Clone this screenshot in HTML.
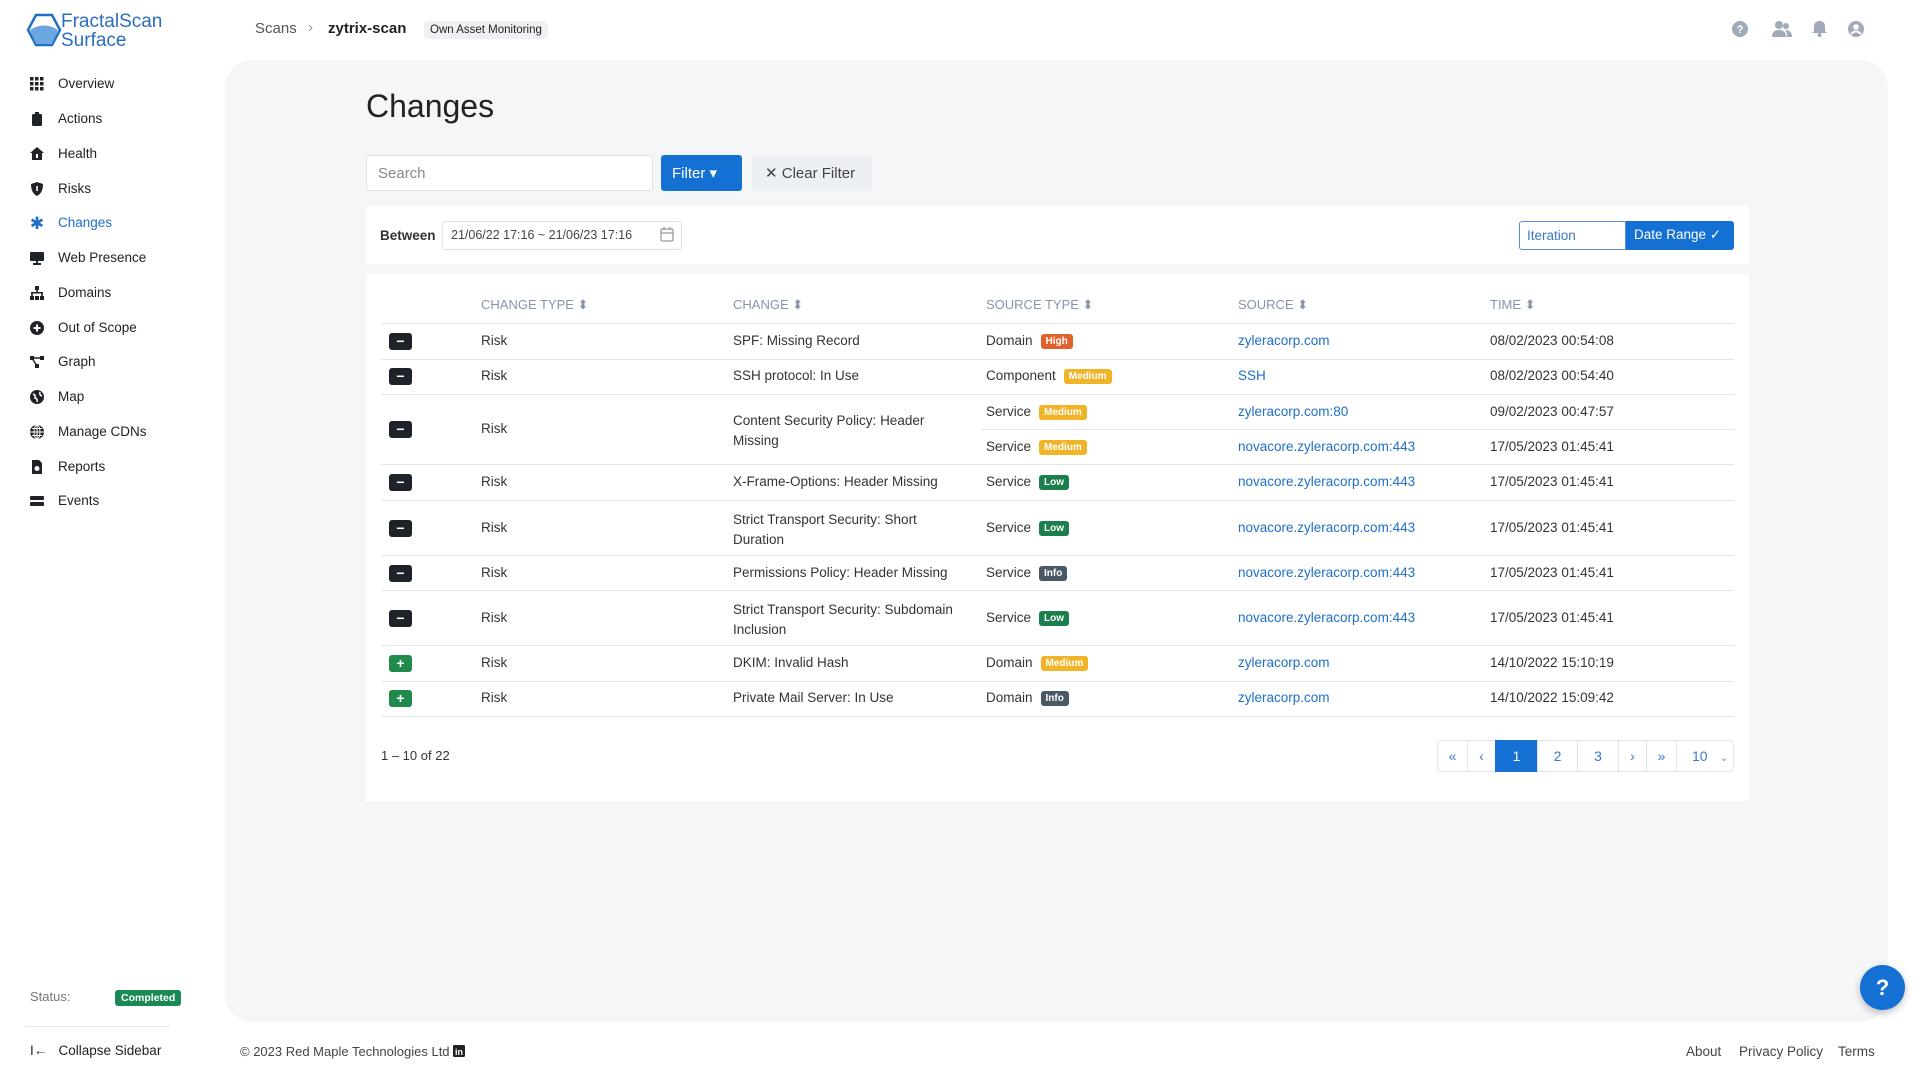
<!DOCTYPE html>
<html><head><meta charset="utf-8"><style>
*{box-sizing:border-box;margin:0;padding:0}
body{width:1920px;height:1080px;background:#fff;font-family:"Liberation Sans",sans-serif;color:#333;position:relative;overflow:hidden;font-size:13.5px}
.a{position:absolute;white-space:nowrap}
.nav{position:absolute;left:30px;font-size:13.5px;color:#222;display:flex;align-items:center}
.nav svg{margin-right:14px}
.panel{position:absolute;left:225px;top:60px;width:1663px;height:962px;background:#f4f6f8;border-radius:28px}
.card{position:absolute;background:#fff}
.row{position:absolute;left:381px;width:1353px;border-top:1px solid #e3e7ec}
.ic{position:absolute;left:389px;width:23px;height:17px;border-radius:3px;background:#1e232a;color:#fff;font-size:14px;line-height:16px;text-align:center;font-weight:bold}
.plus{background:#1f8a4c}
.b{display:inline-block;color:#fff;font-size:10px;font-weight:bold;padding:2px 5px;border-radius:3px;margin-left:8px;vertical-align:1px}
.H{background:#e0612b}.M{background:#f0b429}.L{background:#1a7f4b}.I{background:#4a5866}
.lk{color:#1e6fc8}
.th{position:absolute;top:297px;font-size:13px;color:#8795a8;text-transform:uppercase}
.pg{position:absolute;top:740px;height:32px;border:1px solid #dde3ea;background:#fff;color:#3a78c8;text-align:center;line-height:30px;font-size:14px}
</style></head><body>
<svg class="a" style="left:26px;top:13px" width="36" height="34" viewBox="0 0 36 34"><polygon points="10,2 26,2 34,17 26,32 10,32 2,17" fill="none" stroke="#1e6fc8" stroke-width="2.5"/><path d="M4 17 Q18 8 32 17 L26 31 L10 31Z" fill="#6aa6e0"/></svg>
<div class="a" style="left:61px;top:12px;font-size:19px;line-height:19px;color:#2a6dbf">FractalScan<br>Surface</div>
<div class="a" style="left:255px;top:20px;font-size:15px;color:#555">Scans</div>
<div class="a" style="left:308px;top:19px;font-size:15px;color:#999">›</div>
<div class="a" style="left:328px;top:20px;font-size:15px;font-weight:bold;color:#222">zytrix-scan</div>
<div class="a" style="left:424px;top:21px;padding:3px 6px;background:#eef0f3;border-radius:4px;font-size:11.5px;color:#222">Own Asset Monitoring</div>
<svg class="a" style="left:1732px;top:21px" width="16" height="16" viewBox="0 0 16 16"><circle cx="8" cy="8" r="8" fill="#a0aab8"/><text x="8" y="12" font-size="11" font-weight="bold" fill="#fff" text-anchor="middle" font-family="Liberation Sans">?</text></svg>
<svg class="a" style="left:1772px;top:20px" width="20" height="17" viewBox="0 0 20 17"><circle cx="7" cy="5" r="4" fill="#a0aab8"/><circle cx="14" cy="6" r="3" fill="#a0aab8"/><path d="M0 17 Q0 10 7 10 Q14 10 14 17Z M13 10 Q20 10 20 17 L15 17 Q15 12 13 10Z" fill="#a0aab8"/></svg>
<svg class="a" style="left:1812px;top:20px" width="15" height="17" viewBox="0 0 15 17"><path d="M7.5 1 Q2 1 2 7 L2 11 L0 13 L15 13 L13 11 L13 7 Q13 1 7.5 1Z" fill="#a0aab8"/><circle cx="7.5" cy="15" r="2" fill="#a0aab8"/></svg>
<svg class="a" style="left:1848px;top:21px" width="16" height="16" viewBox="0 0 16 16"><circle cx="8" cy="8" r="8" fill="#a0aab8"/><circle cx="8" cy="6" r="2.8" fill="#fff"/><path d="M3 13 Q8 8 13 13" stroke="#fff" stroke-width="2" fill="none"/></svg>

<div class="nav" style="top:76px"><svg width="14" height="14"><g fill="#1f2328"><rect x="0" y="0" width="3.5" height="3.5"/><rect x="5" y="0" width="3.5" height="3.5"/><rect x="10" y="0" width="3.5" height="3.5"/><rect x="0" y="5" width="3.5" height="3.5"/><rect x="5" y="5" width="3.5" height="3.5"/><rect x="10" y="5" width="3.5" height="3.5"/><rect x="0" y="10" width="3.5" height="3.5"/><rect x="5" y="10" width="3.5" height="3.5"/><rect x="10" y="10" width="3.5" height="3.5"/></g></svg>Overview</div>
<div class="nav" style="top:111px"><svg width="14" height="14"><rect x="2" y="2" width="10" height="12" rx="1.5" fill="#1f2328"/><rect x="5" y="0" width="4" height="3" fill="#1f2328"/></svg>Actions</div>
<div class="nav" style="top:146px"><svg width="14" height="14"><path d="M7 0 L14 6 L12 6 L12 13 L2 13 L2 6 L0 6Z" fill="#1f2328"/><rect x="6" y="7" width="2" height="4" fill="#fff"/></svg>Health</div>
<div class="nav" style="top:181px"><svg width="14" height="14"><path d="M7 0 L13 2 Q13 11 7 14 Q1 11 1 2Z" fill="#1f2328"/><rect x="6.2" y="4" width="1.6" height="5" fill="#fff"/></svg>Risks</div>
<div class="nav" style="top:215px;color:#1e6fc8"><svg width="14" height="14"><text x="7" y="13" font-size="17" fill="#1e6fc8" text-anchor="middle" font-family="Liberation Sans">✱</text></svg>Changes</div>
<div class="nav" style="top:250px"><svg width="14" height="14"><rect x="0" y="1" width="14" height="9" rx="1" fill="#1f2328"/><rect x="6" y="10" width="2" height="2" fill="#1f2328"/><rect x="3" y="12" width="8" height="2" fill="#1f2328"/></svg>Web Presence</div>
<div class="nav" style="top:285px"><svg width="14" height="14"><g fill="#1f2328"><rect x="5" y="0" width="4" height="4"/><rect x="1" y="6" width="12" height="1.5"/><rect x="6.2" y="3" width="1.6" height="4"/><rect x="0" y="10" width="4" height="4"/><rect x="5" y="10" width="4" height="4"/><rect x="10" y="10" width="4" height="4"/><rect x="1.2" y="6" width="1.6" height="4"/><rect x="11.2" y="6" width="1.6" height="4"/></g></svg>Domains</div>
<div class="nav" style="top:320px"><svg width="14" height="14"><circle cx="7" cy="7" r="7" fill="#1f2328"/><path d="M7 3.5V10.5M3.5 7H10.5" stroke="#fff" stroke-width="2"/></svg>Out of Scope</div>
<div class="nav" style="top:354px"><svg width="14" height="14"><g fill="#1f2328"><rect x="0" y="1" width="4" height="4"/><rect x="10" y="1" width="4" height="4"/><rect x="5" y="9" width="4" height="4"/></g><path d="M2 3H12M2 3L7 11" stroke="#1f2328" stroke-width="1.5"/></svg>Graph</div>
<div class="nav" style="top:389px"><svg width="14" height="14"><circle cx="7" cy="7" r="7" fill="#1f2328"/><path d="M3 4 Q6 5 5 8 Q8 9 7 12 M10 2 Q9 5 12 6" stroke="#fff" stroke-width="1.5" fill="none"/></svg>Map</div>
<div class="nav" style="top:424px"><svg width="14" height="14"><circle cx="7" cy="7" r="7" fill="#1f2328"/><path d="M0 7H14M7 0V14M2 3.5H12M2 10.5H12" stroke="#fff" stroke-width="1"/><ellipse cx="7" cy="7" rx="3" ry="7" stroke="#fff" fill="none"/></svg>Manage CDNs</div>
<div class="nav" style="top:459px"><svg width="14" height="14"><path d="M2 0H9L12 3V14H2Z" fill="#1f2328"/><circle cx="7" cy="8.5" r="2.5" fill="#fff"/></svg>Reports</div>
<div class="nav" style="top:493px"><svg width="14" height="14"><rect x="0" y="2" width="14" height="4" rx="1" fill="#1f2328"/><rect x="0" y="8" width="14" height="4" rx="1" fill="#1f2328"/></svg>Events</div>
<div class="a" style="left:30px;top:989px;color:#777;font-size:13px">Status:</div>
<div class="a" style="left:115px;top:990px;background:#1a8a55;color:#fff;font-size:10.5px;font-weight:bold;padding:2px 6px;border-radius:3px">Completed</div>
<div class="a" style="left:26px;top:1026px;width:144px;border-top:1px solid #e3e7ec"></div>
<div class="a" style="left:30px;top:1043px;font-size:13.5px;color:#222">I← &nbsp; Collapse Sidebar</div>

<div class="panel"></div>
<div class="a" style="left:366px;top:88px;font-size:32px;color:#222">Changes</div>
<div class="a" style="left:366px;top:155px;width:287px;height:36px;background:#fff;border:1px solid #dfe3e8;border-radius:3px;padding:9px 11px;font-size:15px;color:#888">Search</div>
<div class="a" style="left:661px;top:155px;width:81px;height:36px;background:#1470d2;border-radius:3px;color:#fff;font-size:15px;padding:9px 11px">Filter ▾</div>
<div class="a" style="left:752px;top:155px;width:120px;height:36px;background:#eceff3;border-radius:3px;color:#444;font-size:15px;padding:9px 13px">✕ Clear Filter</div>

<div class="card" style="left:366px;top:206px;width:1383px;height:58px"></div>
<div class="a" style="left:380px;top:228px;font-weight:bold;font-size:13.5px;color:#333">Between</div>
<div class="a" style="left:442px;top:221px;width:240px;height:29px;border:1px solid #dfe3e8;border-radius:3px;padding:6px 8px;font-size:12.5px;color:#444">21/06/22 17:16 ~ 21/06/23 17:16</div>
<svg class="a" style="left:660px;top:227px" width="14" height="15" viewBox="0 0 14 15"><rect x="1" y="2" width="12" height="12" rx="1.5" fill="none" stroke="#999" stroke-width="1.3"/><path d="M1 6H13M4 0V3M10 0V3" stroke="#999" stroke-width="1.3"/></svg>
<div class="a" style="left:1519px;top:221px;width:107px;height:29px;border:1px solid #5a8fcf;border-radius:3px 0 0 3px;padding:6px 7px;font-size:13.5px;color:#3a78c8">Iteration</div>
<div class="a" style="left:1626px;top:221px;width:108px;height:29px;background:#1470d2;border-radius:0 3px 3px 0;padding:6px 8px;font-size:13.5px;color:#fff">Date Range ✓</div>

<div class="card" style="left:366px;top:274px;width:1383px;height:527px"></div>
<div class="th" style="left:481px">Change Type ⬍</div>
<div class="th" style="left:733px">Change ⬍</div>
<div class="th" style="left:986px">Source Type ⬍</div>
<div class="th" style="left:1238px">Source ⬍</div>
<div class="th" style="left:1490px">Time ⬍</div>

<div class="row" style="top:323px"></div><div class="row" style="top:359px"></div><div class="row" style="top:394px"></div><div class="row" style="top:429px;left:981px;width:753px"></div><div class="row" style="top:464px"></div><div class="row" style="top:500px"></div><div class="row" style="top:555px"></div><div class="row" style="top:590px"></div><div class="row" style="top:645px"></div><div class="row" style="top:681px"></div><div class="row" style="top:716px"></div>

<div class="ic" style="top:333px">−</div><div class="a" style="left:481px;top:333px">Risk</div><div class="a" style="left:733px;top:333px">SPF: Missing Record</div><div class="a" style="left:986px;top:333px">Domain<span class="b H">High</span></div><div class="a lk" style="left:1238px;top:333px">zyleracorp.com</div><div class="a" style="left:1490px;top:333px">08/02/2023 00:54:08</div>
<div class="ic" style="top:368px">−</div><div class="a" style="left:481px;top:368px">Risk</div><div class="a" style="left:733px;top:368px">SSH protocol: In Use</div><div class="a" style="left:986px;top:368px">Component<span class="b M">Medium</span></div><div class="a lk" style="left:1238px;top:368px">SSH</div><div class="a" style="left:1490px;top:368px">08/02/2023 00:54:40</div>
<div class="ic" style="top:421px">−</div><div class="a" style="left:481px;top:421px">Risk</div><div class="a" style="left:733px;top:411px;line-height:20px">Content Security Policy: Header<br>Missing</div>
<div class="a" style="left:986px;top:404px">Service<span class="b M">Medium</span></div><div class="a lk" style="left:1238px;top:404px">zyleracorp.com:80</div><div class="a" style="left:1490px;top:404px">09/02/2023 00:47:57</div>
<div class="a" style="left:986px;top:439px">Service<span class="b M">Medium</span></div><div class="a lk" style="left:1238px;top:439px">novacore.zyleracorp.com:443</div><div class="a" style="left:1490px;top:439px">17/05/2023 01:45:41</div>
<div class="ic" style="top:474px">−</div><div class="a" style="left:481px;top:474px">Risk</div><div class="a" style="left:733px;top:474px">X-Frame-Options: Header Missing</div><div class="a" style="left:986px;top:474px">Service<span class="b L">Low</span></div><div class="a lk" style="left:1238px;top:474px">novacore.zyleracorp.com:443</div><div class="a" style="left:1490px;top:474px">17/05/2023 01:45:41</div>
<div class="ic" style="top:520px">−</div><div class="a" style="left:481px;top:520px">Risk</div><div class="a" style="left:733px;top:510px;line-height:20px">Strict Transport Security: Short<br>Duration</div><div class="a" style="left:986px;top:520px">Service<span class="b L">Low</span></div><div class="a lk" style="left:1238px;top:520px">novacore.zyleracorp.com:443</div><div class="a" style="left:1490px;top:520px">17/05/2023 01:45:41</div>
<div class="ic" style="top:565px">−</div><div class="a" style="left:481px;top:565px">Risk</div><div class="a" style="left:733px;top:565px">Permissions Policy: Header Missing</div><div class="a" style="left:986px;top:565px">Service<span class="b I">Info</span></div><div class="a lk" style="left:1238px;top:565px">novacore.zyleracorp.com:443</div><div class="a" style="left:1490px;top:565px">17/05/2023 01:45:41</div>
<div class="ic" style="top:610px">−</div><div class="a" style="left:481px;top:610px">Risk</div><div class="a" style="left:733px;top:600px;line-height:20px">Strict Transport Security: Subdomain<br>Inclusion</div><div class="a" style="left:986px;top:610px">Service<span class="b L">Low</span></div><div class="a lk" style="left:1238px;top:610px">novacore.zyleracorp.com:443</div><div class="a" style="left:1490px;top:610px">17/05/2023 01:45:41</div>
<div class="ic plus" style="top:655px">+</div><div class="a" style="left:481px;top:655px">Risk</div><div class="a" style="left:733px;top:655px">DKIM: Invalid Hash</div><div class="a" style="left:986px;top:655px">Domain<span class="b M">Medium</span></div><div class="a lk" style="left:1238px;top:655px">zyleracorp.com</div><div class="a" style="left:1490px;top:655px">14/10/2022 15:10:19</div>
<div class="ic plus" style="top:690px">+</div><div class="a" style="left:481px;top:690px">Risk</div><div class="a" style="left:733px;top:690px">Private Mail Server: In Use</div><div class="a" style="left:986px;top:690px">Domain<span class="b I">Info</span></div><div class="a lk" style="left:1238px;top:690px">zyleracorp.com</div><div class="a" style="left:1490px;top:690px">14/10/2022 15:09:42</div>

<div class="a" style="left:381px;top:748px;font-size:13px">1 – 10 of 22</div>
<div class="pg" style="left:1437px;width:31px;border-radius:4px 0 0 4px">«</div>
<div class="pg" style="left:1467px;width:29px">‹</div>
<div class="pg" style="left:1495px;width:43px;background:#1470d2;border-color:#1470d2;color:#fff">1</div>
<div class="pg" style="left:1537px;width:41px">2</div>
<div class="pg" style="left:1577px;width:42px">3</div>
<div class="pg" style="left:1618px;width:29px">›</div>
<div class="pg" style="left:1646px;width:31px">»</div>
<div class="pg" style="left:1676px;width:58px;border-radius:0 4px 4px 0;text-align:left;padding-left:15px">10 <span style="font-size:10px;margin-left:8px;color:#888">⌄</span></div>

<div class="a" style="left:1860px;top:965px;width:45px;height:45px;border-radius:50%;background:#1470d2;color:#fff;font-size:22px;font-weight:bold;text-align:center;line-height:45px;box-shadow:0 3px 8px rgba(0,0,0,.25)">?</div>
<div class="a" style="left:240px;top:1044px;font-size:13px;color:#444">© 2023 Red Maple Technologies Ltd <svg width="12" height="12" style="vertical-align:-1px"><rect width="12" height="12" rx="1.5" fill="#222"/><text x="6" y="10" font-size="9" font-weight="bold" fill="#fff" text-anchor="middle" font-family="Liberation Sans">in</text></svg></div>
<div class="a" style="left:1686px;top:1044px;font-size:13.5px;color:#444">About</div>
<div class="a" style="left:1739px;top:1044px;font-size:13.5px;color:#444">Privacy Policy</div>
<div class="a" style="left:1838px;top:1044px;font-size:13.5px;color:#444">Terms</div>
</body></html>
